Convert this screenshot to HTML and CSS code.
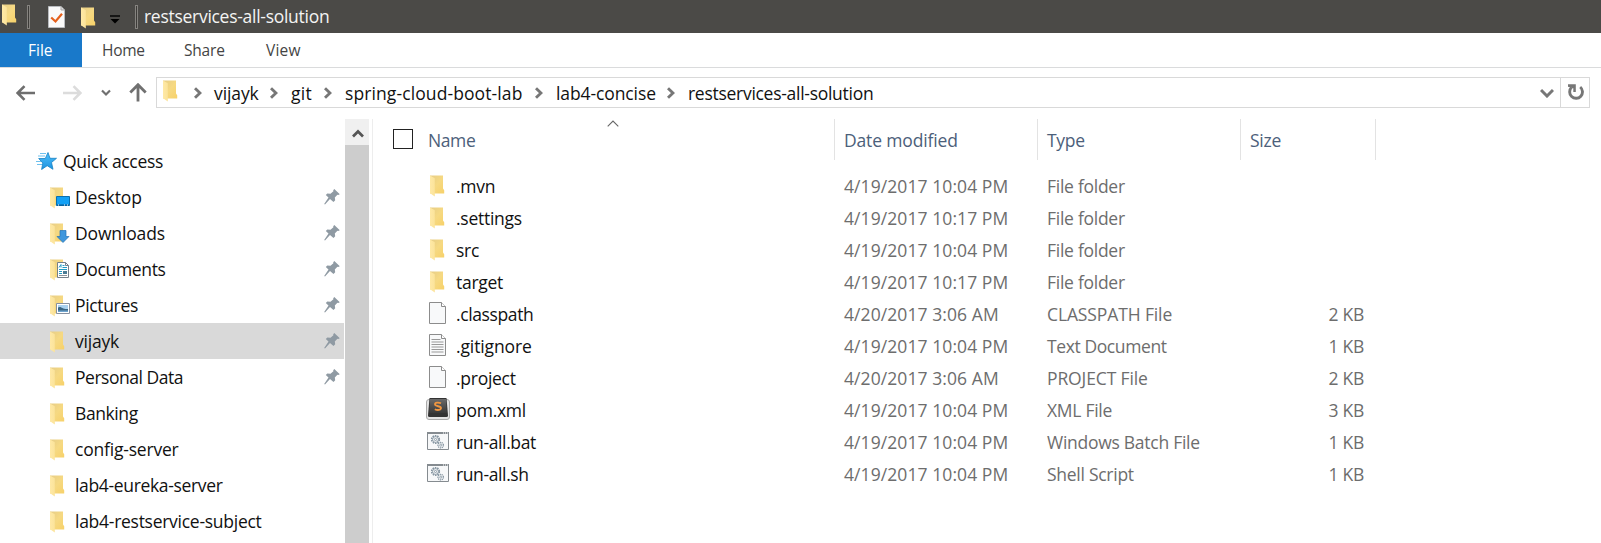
FILE: index.html
```html
<!DOCTYPE html>
<html lang="en">
<head>
<meta charset="utf-8">
<title>restservices-all-solution</title>
<link rel="stylesheet" href="styles.css">
</head>
<body>
<svg class="defs" width="0" height="0" aria-hidden="true">
  <defs>
    <linearGradient id="gFront" x1="0" x2="1"><stop offset="0" stop-color="#ffe9a6"/><stop offset="1" stop-color="#fbe39a"/></linearGradient>
    <linearGradient id="gBack" x1="0" x2="1" y2="1"><stop offset="0" stop-color="#e6cd88"/><stop offset=".5" stop-color="#f6d982"/><stop offset="1" stop-color="#f7d169"/></linearGradient>
    <linearGradient id="gKey" x2="0" y2="1"><stop offset="0" stop-color="#6a6a6a"/><stop offset="1" stop-color="#393939"/></linearGradient>
    <linearGradient id="gStar" x2="0" y2="1"><stop offset="0" stop-color="#4dc0fb"/><stop offset="1" stop-color="#1c92e0"/></linearGradient>
  </defs>
  <symbol id="folder" viewBox="0 0 22 22">
    <path d="M0 .5h13v13l1.200 1.800v3.200H0z" fill="url(#gBack)"/>
    <path d="M0 .5l4.800 2.700v18.300L0 18.300z" fill="url(#gFront)"/>
  </symbol>
  <symbol id="page" viewBox="0 0 22 22">
    <path d="M.5.500h12l4 4v17H.5z" fill="#f8f9fa" stroke="#8c8c8c"/>
    <path d="M12.500.5v4h4" fill="#fff" stroke="#8c8c8c"/>
  </symbol>
  <symbol id="text" viewBox="0 0 22 22">
    <use href="#page"/>
    <path d="M2.500 5.500h9M2.500 8h12M2.500 10.500h12M2.500 13h12M2.500 15.500h12M2.500 18h12" stroke="#999" fill="none"/>
  </symbol>
  <symbol id="batch" viewBox="0 0 22 18">
    <path d="M.5.500h21v17H.5z" fill="#f7f8f9" stroke="#858b90"/>
    <path d="M0 0h22v2H0z" fill="#858b90"/>
    <path d="M16 1h1M18 1h1M20 1h1" stroke="#fff"/>
    <circle cx="8.500" cy="7.500" r="3.800" fill="none" stroke="#8494a0" stroke-width="1.600" stroke-dasharray="1.500 .9"/>
    <circle cx="8.500" cy="7.500" r="2.900" fill="none" stroke="#8494a0" stroke-width=".9"/>
    <circle cx="8.500" cy="7.500" r="1.100" fill="none" stroke="#8494a0" stroke-width=".9"/>
    <circle cx="13.700" cy="13.200" r="2.700" fill="none" stroke="#8494a0" stroke-width="1.300" stroke-dasharray="1.200 .7"/>
    <circle cx="13.700" cy="13.200" r="1" fill="none" stroke="#8494a0" stroke-width=".8"/>
  </symbol>
  <symbol id="pin" viewBox="0 0 16 16">
    <path d="M10.300 0l5.500 5.300-1.600.7-.8-.2-2.600 2.800.4 2.700-1.700 1.800-3.500-3.200L1 15.500l-.8-.4L4.500 8.600 1.800 6l1.500-1.500 3.200.3 2.900-2.600-.2-1z" fill="#8f9aa3"/>
  </symbol>
  <symbol id="next" viewBox="0 0 8 12"><path d="M1 1.200L6 6 1 10.800" fill="none" stroke="#777" stroke-width="2.900"/></symbol>
</svg>

<header class="titlebar">
  <svg class="folder"><use href="#folder"/></svg>
  <span class="divider first"></span>
  <svg class="check" viewBox="0 0 17 22"><path d="M.5.500h12.500l3.500 3.500v17.500H.5z" fill="#fafafa" stroke="#b9bcc0"/><path d="M13 .5V4h3.500" fill="#ddd" stroke="#a9a9a9"/><path d="M3.200 11.500l4.300 4 6.500-7.800" fill="none" stroke="#e5601c" stroke-width="2.200"/></svg>
  <svg class="folder second"><use href="#folder"/></svg>
  <svg class="customize" viewBox="0 0 10 9"><path d="M0 1h10" stroke="#000" stroke-width="1.400"/><path d="M.5 4h9L5 8.500z" fill="#000"/></svg>
  <span class="divider last"></span>
  <h1 class="title">restservices-all-solution</h1>
</header>

<nav class="ribbon">
  <a class="tab file">File</a><a class="tab home">Home</a><a class="tab share">Share</a><a class="tab view">View</a>
</nav>

<div class="navbar">
  <svg class="back" viewBox="0 0 20 16"><path d="M19 8H2M8.500 1.200L1.700 8l6.800 6.800" fill="none" stroke="#6e6e6e" stroke-width="2.600"/></svg>
  <svg class="forward" viewBox="0 0 20 16"><path d="M1 8h17M11.500 1.200L18.300 8l-6.800 6.800" fill="none" stroke="#dcdcdc" stroke-width="2.600"/></svg>
  <svg class="recent" viewBox="0 0 10 8"><path d="M1 1.500l4 4 4-4" fill="none" stroke="#707070" stroke-width="2.200"/></svg>
  <svg class="up" viewBox="0 0 18 19"><path d="M9 18.500V2M1.300 9.400L9 1.700l7.700 7.700" fill="none" stroke="#707070" stroke-width="2.800"/></svg>
  <div class="address">
    <div class="crumbs">
      <svg class="folder"><use href="#folder"/></svg>
      <svg class="next lead"><use href="#next"/></svg>
      <span class="crumb c-user">vijayk</span><svg class="next"><use href="#next"/></svg>
      <span class="crumb c-git">git</span><svg class="next"><use href="#next"/></svg>
      <span class="crumb c-lab">spring-cloud-boot-lab</span><svg class="next"><use href="#next"/></svg>
      <span class="crumb c-concise">lab4-concise</span><svg class="next"><use href="#next"/></svg>
      <span class="crumb c-current">restservices-all-solution</span>
    </div>
    <svg class="drop" viewBox="0 0 14 10"><path d="M1 2l6 6 6-6" fill="none" stroke="#777" stroke-width="3"/></svg>
    <div class="refresh"><svg viewBox="0 0 16 17"><path d="M12.200 3a6.400 6.400 0 1 1-8.600.3" fill="none" stroke="#777" stroke-width="2.900"/><path d="M0 .3h7.800V8H5.300V4.200L0 2.800z" fill="#777"/></svg></div>
  </div>
</div>

<div class="body">
  <aside class="sidebar">
    <div class="item root">
      <svg class="star" viewBox="0 0 22 18"><path d="M13 .5l2 5.800h6.500l-5 4.200 1.500 6.800-5.800-3.600-5.600 3.800 1.200-6.500-4.100-4.500h6.600z" fill="url(#gStar)" stroke="#1681c4" stroke-width=".8"/><path d="M5 1.500h6M3 4h7M1 9.500h5M2 12.500h5" stroke="#6fc1ee" stroke-width="1"/></svg>
      <span class="quick">Quick access</span>
    </div>
    <div class="item"><svg class="folder"><use href="#folder"/><path d="M6.500 9.500h13v9h-13z" fill="#12a0f5" stroke="#0b6fae"/><path d="M7 18h12" stroke="#075a94"/><path d="M8 18h1m5 0h1m2 0h1" stroke="#fff"/></svg><span class="desktop">Desktop</span><svg class="pin"><use href="#pin"/></svg></div>
    <div class="item"><svg class="folder"><use href="#folder"/><path d="M10 7.500h6v6h3l-6 6-6-6h3z" fill="#3f97dd" stroke="#2473b8" stroke-width=".7"/></svg><span class="downloads">Downloads</span><svg class="pin"><use href="#pin"/></svg></div>
    <div class="item"><svg class="folder"><use href="#folder"/><path d="M7.500 3.500h8l3 3v12h-11z" fill="#fff" stroke="#75808a"/><path d="M15.500 3.500v3h3M13 13.500h4" fill="none" stroke="#75808a"/><path d="M9 8.500l2-3v3M12.500 6.500h2M12.500 8.500h4.500M9 10.500h8M9 12.500h3M9 14.500h3" fill="none" stroke="#239cc4"/><path d="M9 16.500h8" stroke="#8a939a"/><path d="M13 12h4v3h-4z" fill="#4b7b94"/></svg><span class="documents">Documents</span><svg class="pin"><use href="#pin"/></svg></div>
    <div class="item"><svg class="folder"><use href="#folder"/><path d="M6.500 8.500h13v10h-13z" fill="#fff" stroke="#8791a0"/><path d="M8 10h10v7H8z" fill="#a9d1ef"/><path d="M8 12.500c3-2 4 2 10 1.500v3H8z" fill="#3a6684"/><path d="M8 15.500h10V17H8z" fill="#6fa5cf"/></svg><span class="pictures">Pictures</span><svg class="pin"><use href="#pin"/></svg></div>
    <div class="item selected"><svg class="folder"><use href="#folder"/></svg><span class="user">vijayk</span><svg class="pin"><use href="#pin"/></svg></div>
    <div class="item"><svg class="folder"><use href="#folder"/></svg><span class="personal">Personal Data</span><svg class="pin"><use href="#pin"/></svg></div>
    <div class="item"><svg class="folder"><use href="#folder"/></svg><span class="banking">Banking</span></div>
    <div class="item"><svg class="folder"><use href="#folder"/></svg><span class="config">config-server</span></div>
    <div class="item"><svg class="folder"><use href="#folder"/></svg><span class="eureka">lab4-eureka-server</span></div>
    <div class="item"><svg class="folder"><use href="#folder"/></svg><span>lab4-restservice-subject</span></div>
  </aside>
  <div class="scrollbar"><div class="scroll-up"><svg viewBox="0 0 12 9"><path d="M1 7.500l5-5 5 5" fill="none" stroke="#555" stroke-width="2.700"/></svg></div></div>
  <main class="files">
    <div class="head">
      <div class="col name"><span class="box"></span><span class="label">Name</span><svg class="sort" viewBox="0 0 12 7"><path d="M.7 6.300L6 1l5.300 5.300" fill="none" stroke="#666" stroke-width="1.100"/></svg></div>
      <div class="col date">Date modified</div>
      <div class="col type">Type</div>
      <div class="col size">Size</div>
    </div>
    <div class="rows">
      <div class="row"><svg class="folder"><use href="#folder"/></svg><span class="fname">.mvn</span><span class="fdate">4/19/2017 10:04 PM</span><span class="ftype">File folder</span><span class="fsize"></span></div>
      <div class="row"><svg class="folder"><use href="#folder"/></svg><span class="fname">.settings</span><span class="fdate">4/19/2017 10:17 PM</span><span class="ftype">File folder</span><span class="fsize"></span></div>
      <div class="row"><svg class="folder"><use href="#folder"/></svg><span class="fname">src</span><span class="fdate">4/19/2017 10:04 PM</span><span class="ftype">File folder</span><span class="fsize"></span></div>
      <div class="row"><svg class="folder"><use href="#folder"/></svg><span class="fname">target</span><span class="fdate">4/19/2017 10:17 PM</span><span class="ftype">File folder</span><span class="fsize"></span></div>
      <div class="row"><svg class="page"><use href="#page"/></svg><span class="fname tight">.classpath</span><span class="fdate">4/20/2017 3:06 AM</span><span class="ftype caps">CLASSPATH File</span><span class="fsize">2 KB</span></div>
      <div class="row"><svg class="page"><use href="#text"/></svg><span class="fname loose">.gitignore</span><span class="fdate">4/19/2017 10:04 PM</span><span class="ftype doc">Text Document</span><span class="fsize">1 KB</span></div>
      <div class="row"><svg class="page"><use href="#page"/></svg><span class="fname">.project</span><span class="fdate">4/20/2017 3:06 AM</span><span class="ftype caps">PROJECT File</span><span class="fsize">2 KB</span></div>
      <div class="row"><svg class="key" viewBox="0 0 24 22"><rect x=".5" y="1.500" width="23" height="20" rx="2.500" fill="#e4e4e4" stroke="#aaa"/><path d="M3.500 0h17l1.500 17.500q0 1.500-1.500 1.500h-17Q2 19 2 17.500z" fill="#333"/><path d="M4 1h16l.8 14H3.200z" fill="url(#gKey)"/><path d="M15 5.300C12.500 4.100 9 4.300 9 6.300c0 2.600 6 1.300 6 3.800 0 2.200-3.700 2.400-6.200 1.100" fill="none" stroke="#f09640" stroke-width="1.800"/></svg><span class="fname">pom.xml</span><span class="fdate">4/19/2017 10:04 PM</span><span class="ftype">XML File</span><span class="fsize">3 KB</span></div>
      <div class="row"><svg class="batch"><use href="#batch"/></svg><span class="fname tight">run-all.bat</span><span class="fdate">4/19/2017 10:04 PM</span><span class="ftype">Windows Batch File</span><span class="fsize">1 KB</span></div>
      <div class="row"><svg class="batch"><use href="#batch"/></svg><span class="fname tight">run-all.sh</span><span class="fdate">4/19/2017 10:04 PM</span><span class="ftype">Shell Script</span><span class="fsize">1 KB</span></div>
    </div>
  </main>
</div>
</body>
</html>
```
FILE: styles.css
```css
* { box-sizing: border-box; }
body {
  margin: 0;
  height: 543px;
  overflow: hidden;
  display: flex;
  flex-direction: column;
  background: #fff;
  color: #111;
  font: 17.5px/24px "Open Sans", "Noto Sans", sans-serif;
  letter-spacing: -0.27px;
  white-space: nowrap;
}
svg { display: block; flex: none; }
.defs { position: absolute; }
.folder { width: 22px; height: 22px; }

/* Title bar */
.titlebar {
  height: 33px;
  flex: none;
  display: flex;
  align-items: flex-start;
  padding: 4px 0 0 2px;
  background: #4b4a47;
}
.divider { width: 3px; height: 24px; border: 1px solid #85837f; background: #3d3c39; }
.divider.first { margin: 1px 18px 0 3px; }
.check { width: 17px; height: 22px; margin: 2px 16px 0 0; }
.folder.second { margin-top: 3px; }
.customize { width: 10px; height: 9px; margin: 11px 0 0 7px; }
.divider.last { margin: 1px 6px 0 15px; }
.title { margin: 0; font-size: 17.5px; font-weight: 400; line-height: 24px; color: #f4f4f3; letter-spacing: -0.28px; }

/* Ribbon */
.ribbon {
  height: 35px;
  flex: none;
  display: flex;
  border-bottom: 1px solid #dadbdc;
  font-size: 15.5px;
  line-height: 35px;
  letter-spacing: 0;
  color: #444;
}
.tab { height: 34px; padding-left: 20px; }
.tab.file { width: 82px; padding-left: 28px; background: #1979ca; color: #fff; }
.tab.home { width: 82px; letter-spacing: -0.3px; }
.tab.share { width: 82px; letter-spacing: -0.2px; }
.tab.view { letter-spacing: 0.2px; }

/* Navigation bar */
.navbar { height: 51px; flex: none; display: flex; align-items: center; padding: 0 11px 2px 16px; }
.back, .forward { width: 20px; height: 16px; }
.forward { margin-left: 26px; }
.recent { width: 10px; height: 8px; margin-left: 19px; }
.up { width: 18px; height: 19px; margin-left: 18px; }
.address {
  flex: 1;
  height: 31px;
  margin-left: 9px;
  display: flex;
  align-items: center;
  border: 1px solid #d9d9d9;
}
.crumbs { flex: 1; display: flex; align-items: center; padding-left: 6px; }
.crumbs .folder { margin-top: -4px; }
.next { width: 8px; height: 12px; }
.next.lead { margin-left: 9px; }
.crumb { flex: none; margin-left: 13px; }
.c-user { width: 56px; margin-left: 12px; letter-spacing: -0.1px; }
.c-git { width: 33px; letter-spacing: 0.3px; }
.c-lab { width: 190px; letter-spacing: 0.1px; }
.c-concise { width: 111px; letter-spacing: -0.1px; }
.c-current { letter-spacing: -0.28px; }
.drop { width: 14px; height: 10px; margin-right: 6px; }
.refresh { width: 29px; height: 29px; border-left: 1px solid #d9d9d9; padding: 6px 0 0 7px; }
.refresh svg { width: 16px; height: 17px; }

/* Quick access tree */
.body { flex: 1; min-height: 0; display: flex; }
.sidebar { width: 345px; padding: 24px 1px 0 0; }
.item { height: 36px; display: flex; align-items: center; padding: 0 4px 1px 50px; }
.item .folder { margin-right: 3px; margin-top: 3px; }
.item.root { padding-left: 35px; }
.item.selected { background: #d9d9d9; }
.star { width: 22px; height: 18px; margin-right: 6px; }
.quick { letter-spacing: -0.33px; }
.desktop, .user { letter-spacing: -0.1px; }
.user { letter-spacing: -0.2px; }
.downloads { letter-spacing: -0.15px; }
.documents, .pictures { letter-spacing: -0.34px; }
.personal { letter-spacing: -0.48px; }
.banking { letter-spacing: -0.4px; }
.config { letter-spacing: -0.2px; }
.eureka { letter-spacing: -0.34px; }
.pin { width: 16px; height: 16px; margin: 0 0 0 auto; }

.scrollbar { width: 24px; flex: none; background: #cdcdcd; }
.scroll-up { height: 26px; background: #f0f0f0; padding: 10px 0 0 7px; }
.scroll-up svg { width: 12px; height: 9px; }

/* File list */
.files { flex: 1; margin-left: 3px; border-left: 1px solid #ededed; }
.head { display: flex; height: 42px; color: #4c607a; }
.col { height: 41px; padding: 9px 0 0 9px; border-right: 1px solid #e3e3e3; }
.col.name { width: 462px; display: flex; padding-left: 20px; position: relative; }
.box { width: 20px; height: 20px; margin: 1px 15px 0 0; border: 1px solid #222; }
.sort { position: absolute; left: 234px; top: 1px; width: 12px; height: 7px; }
.col.date { width: 203px; letter-spacing: -0.15px; }
.col.type { width: 203px; }
.col.size { width: 135px; }
.label { letter-spacing: -0.4px; }
.rows { padding-top: 9px; }
.row {
  height: 32px;
  display: grid;
  grid-template-columns: 83px 388px 203px 203px 114px;
  align-items: center;
  color: #6d6d6d;
}
.row .folder { margin-left: 57px; }
.row .page { width: 22px; height: 22px; margin: -2px 0 0 56px; }
.row .key { width: 24px; height: 22px; margin: -2px 0 0 53px; }
.row .batch { width: 22px; height: 18px; margin: -2px 0 0 54px; }
.fname { color: #111; }
.fname.tight { letter-spacing: -0.38px; }
.fname.loose { letter-spacing: -0.12px; }
.fdate { letter-spacing: 0.08px; }
.caps { letter-spacing: -0.12px; }
.doc { letter-spacing: -0.4px; }
.fsize { text-align: right; }
```
